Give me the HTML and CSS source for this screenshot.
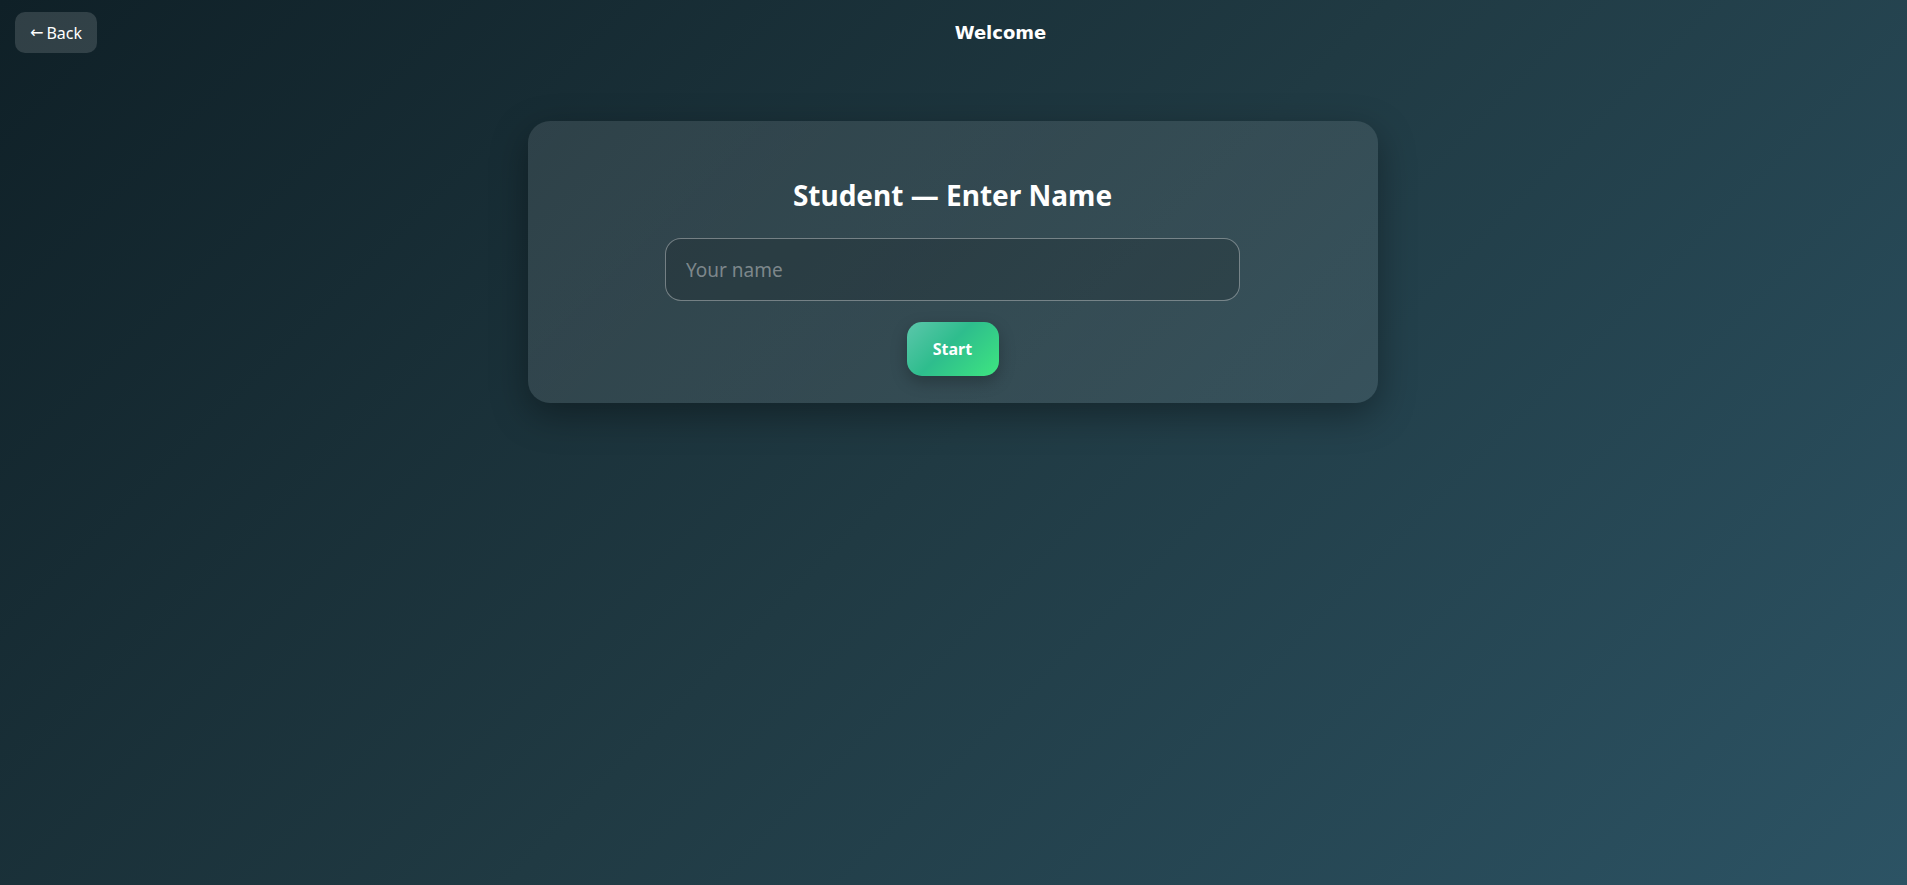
FILE: index.html
```html
<!DOCTYPE html>
<html lang="en">
<head>
<meta charset="utf-8">
<title>Welcome</title>
<link rel="stylesheet" href="styles.css">
</head>
<body>
<header class="topbar">
  <button class="back-btn"><span class="back-arrow">←</span> Back</button>
  <h1 class="page-title">Welcome</h1>
</header>
<main class="main">
  <section class="card">
    <h2 class="card-title">Student — Enter Name</h2>
    <input class="name-input" type="text" placeholder="Your name">
    <button class="start-btn">Start</button>
  </section>
</main>
</body>
</html>
```
FILE: styles.css
```css
* { box-sizing: border-box; }
html, body { height: 100%; }
body {
  margin: 0;
  min-height: 100vh;
  background: linear-gradient(135deg, #0f2027 0%, #203a43 50%, #2c5364 100%);
  font-family: "Noto Sans", "Open Sans", "Liberation Sans", sans-serif;
  color: #fff;
}
.topbar {
  display: flex;
  align-items: center;
  gap: 12px;
  padding: 12px 15px 0;
}
.back-btn {
  height: 41px;
  width: 82px;
  border: none;
  border-radius: 10px;
  background: rgba(255,255,255,0.14);
  color: #fff;
  font-family: inherit;
  font-size: 16px;
  padding: 0 10px;
  display: flex;
  align-items: center;
  justify-content: center;
  gap: 3px;
}
.back-arrow {
  font-family: "DejaVu Sans", sans-serif;
  font-size: 16px;
}
.page-title {
  flex: 1;
  margin: 0;
  text-align: center;
  font-family: "DejaVu Sans", sans-serif;
  font-weight: bold;
  font-size: 18px;
}
.main {
  display: flex;
  justify-content: center;
  padding-top: 68px;
}
.card {
  width: 850px;
  margin-right: 2px;
  padding: 28px 40px 27px;
  border-radius: 22px;
  background: linear-gradient(135deg, rgba(255,255,255,0.1), rgba(255,255,255,0.09));
  box-shadow: 0 12px 36px rgba(0,0,0,0.35);
  display: flex;
  flex-direction: column;
  align-items: center;
}
.card-title {
  margin: 29px 0 26px;
  font-size: 28px;
  line-height: 34px;
  font-weight: bold;
}
.name-input {
  width: 575px;
  height: 63px;
  border: 1px solid rgba(255,255,255,0.35);
  border-radius: 16px;
  background: rgba(0,0,0,0.14);
  color: #fff;
  padding: 0 20px;
  font-family: inherit;
  font-size: 19px;
  outline: none;
}
.name-input::placeholder { color: #7d878b; }
.start-btn {
  margin-top: 21px;
  width: 92px;
  height: 54px;
  border: none;
  border-radius: 15px;
  background: linear-gradient(135deg, #5cc6ab 0%, #2ebd8d 45%, #3ee680 100%);
  color: #fff;
  font-family: inherit;
  font-weight: bold;
  font-size: 16px;
  box-shadow: 0 6px 16px rgba(0,0,0,0.25);
}
```
